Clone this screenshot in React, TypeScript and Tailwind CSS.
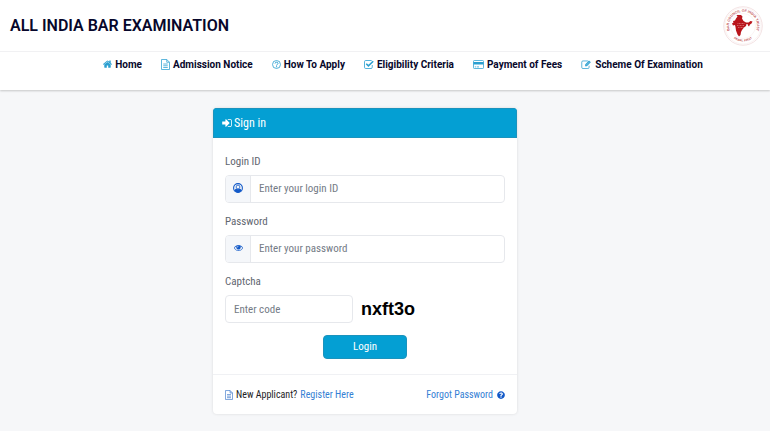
import type { ReactNode } from 'react';
import { FaQuestionCircle } from 'react-icons/fa';

interface IconProps {
	className?: string;
}

function HomeIcon({ className }: IconProps) {
	return (
		<svg viewBox="90 180 1612 1400" fill="currentColor" className={className} aria-hidden="true">
			<path d="M1472 992v480q0 26-19 45t-45 19h-384v-384h-256v384h-384q-26 0-45-19t-19-45v-480q0-1 .5-3t.5-3l575-474 575 474q1 2 1 6zm223-69l-62 74q-8 9-21 11h-3q-13 0-21-7l-692-577-692 577q-12 8-24 7-13-2-21-11l-62-74q-8-10-7-23.5t11-21.5l719-599q32-26 76-26t76 26l244 204v-195q0-14 9-23t23-9h192q14 0 23 9t9 23v408l219 182q10 8 11 21.5t-7 23.5z" />
		</svg>
	);
}

function FileIcon({ className }: IconProps) {
	return (
		<svg viewBox="0 0 18 22" fill="none" stroke="currentColor" strokeWidth="1.5" strokeLinejoin="round" className={className} aria-hidden="true">
			<path d="M1 1h10.5L17 6.500V21H1zM11.500 1v5.500H17M4.500 10h9M4.500 13.500h9M4.500 17h9" />
		</svg>
	);
}

function HelpIcon({ className }: IconProps) {
	return (
		<svg viewBox="0 0 20 20" fill="none" stroke="currentColor" strokeWidth="1.800" className={className} aria-hidden="true">
			<circle cx="10" cy="10" r="8.800" />
			<path d="M6.800 7.800C7 5.800 8.300 4.900 10 4.900c2 0 3.300 1.200 3.300 2.700 0 2.300-3.200 2.200-3.200 4.800" strokeWidth="2.200" />
			<path d="M8.900 13.700h2.400V16H8.900z" fill="currentColor" stroke="none" />
		</svg>
	);
}

function CheckIcon({ className }: IconProps) {
	return (
		<svg viewBox="0 0 20 18" fill="none" stroke="currentColor" className={className} aria-hidden="true">
			<path d="M16.500 10v4.500a2.500 2.500 0 0 1-2.500 2.500H3.500A2.500 2.500 0 0 1 1 14.500v-11A2.500 2.500 0 0 1 3.500 1H14l1.500.4" strokeWidth="1.600" />
			<path d="M4.500 7.500l4.300 4.300L18.500 2.500" strokeWidth="3" />
		</svg>
	);
}

function CardIcon({ className }: IconProps) {
	return (
		<svg viewBox="0 0 22 18" fill="none" stroke="currentColor" strokeWidth="1.500" className={className} aria-hidden="true">
			<rect x="1" y="1" width="20" height="16" rx="1.500" />
			<path d="M1 4h20v5H1z" fill="currentColor" stroke="none" />
			<path d="M3.500 13.800h3M8 13.800h4" />
		</svg>
	);
}

function EditIcon({ className }: IconProps) {
	return (
		<svg viewBox="0 0 22 19" fill="none" stroke="currentColor" className={className} aria-hidden="true">
			<path d="M16.500 12v3.500A2.500 2.500 0 0 1 14 18H3.500A2.500 2.500 0 0 1 1 15.500v-11A2.500 2.500 0 0 1 3.500 2H14" strokeWidth="1.600" />
			<path d="M8 9.500L16.300 1.200l3.800 3.800-8.300 8.300H8z" fill="currentColor" stroke="none" />
			<path d="M9.600 11.800l7.700-7.700" stroke="#ffffff" strokeWidth=".8" />
		</svg>
	);
}

function SignInIcon({ className }: IconProps) {
	return (
		<svg viewBox="128 256 1536 1280" fill="currentColor" className={className} aria-hidden="true">
			<path d="M1312 896q0 26-19 45l-544 544q-19 19-45 19t-45-19-19-45v-288h-448q-26 0-45-19t-19-45v-384q0-26 19-45t45-19h448v-288q0-26 19-45t45-19 45 19l544 544q19 19 19 45zm352-352v704q0 119-84.5 203.5t-203.5 84.5h-320q-13 0-22.5-9.5t-9.5-22.5q0-4-1-20t-.5-26.5 3-23.5 10-19.5 20.5-6.5h320q66 0 113-47t47-113v-704q0-66-47-113t-113-47h-312l-11.5-1-11.5-3-8-5.5-7-9-2-13.5q0-4-1-20t-.5-26.5 3-23.5 10-19.5 20.5-6.5h320q119 0 203.5 84.5t84.5 203.5z" />
		</svg>
	);
}

function UserIcon({ className }: IconProps) {
	return (
		<svg viewBox="0 0 20 20" fill="none" stroke="currentColor" className={className} aria-hidden="true">
			<circle cx="10" cy="10" r="8.800" strokeWidth="2.200" />
			<path d="M3 15.500C3.600 12.600 5 11.600 7 11.600c1.800 1.100 4.200 1.100 6 0 2 0 3.400 1 4 3.900C13.500 20.200 6.500 20.200 3 15.500z" fill="currentColor" stroke="none" />
			<circle cx="10" cy="8" r="3.800" fill="#f5f7fa" strokeWidth="1.600" />
		</svg>
	);
}

function EyeIcon({ className }: IconProps) {
	return (
		<svg viewBox="0 384 1792 1152" fill="currentColor" className={className} aria-hidden="true">
			<path d="M1664 960q-152-236-381-353 61 104 61 225 0 185-131.5 316.5t-316.5 131.5-316.5-131.5-131.5-316.5q0-121 61-225-229 117-381 353 133 205 333.5 326.5t434.5 121.5 434.5-121.5 333.5-326.5zm-720-384q0-20-14-34t-34-14q-125 0-214.5 89.5t-89.5 214.5q0 20 14 34t34 14 34-14 14-34q0-86 61-147t147-61q20 0 34-14t14-34zm848 384q0 34-20 69-140 230-376.5 368.5t-499.5 138.5-499.5-139-376.5-368q-20-35-20-69t20-69q140-229 376.5-368t499.5-139 499.5 139 376.5 368q20 35 20 69z" />
		</svg>
	);
}

/** Round council seal with the map in the middle */
function Seal({ className }: IconProps) {
	return (
		<svg viewBox="0 0 80 80" className={className} role="img" aria-label="Bar Council of India Trust">
			<defs>
				<path id="seal-top" d="M14 50A28 28 0 1 1 66 50" />
				<path id="seal-bottom" d="M20 64A32 32 0 0 0 60 64" />
			</defs>
			<circle cx="40" cy="40" r="38.500" fill="#ffffff" stroke="#e6c4c6" strokeWidth="1" />
			<circle cx="40" cy="40" r="36" fill="none" stroke="#f3e2e3" strokeWidth=".8" />
			<circle cx="40" cy="40" r="25" fill="none" stroke="#f3e2e3" strokeWidth=".8" />
			<g fill="#c4565b" fontFamily="Liberation Sans, sans-serif" fontWeight="700">
				<text fontSize="7">
					<textPath href="#seal-top" startOffset="50%" textAnchor="middle">BAR COUNCIL OF INDIA TRUST</textPath>
				</text>
				<text fontSize="6">
					<textPath href="#seal-bottom" startOffset="50%" textAnchor="middle">PEARL FIRST</textPath>
				</text>
			</g>
			<path
				d="M31 18l5 0 3 3-1 4 3 5 5 3 5 0 4-3 4 1-2 4-3 2-2 4-2-2-1-3-2 0-1 4-4 3-4 5-2 4-1 6-3 3-3-4-3-8-1-7-1-4-4 1-2-4 3-2-1-3 4-1 2-4 3-4-2-3z"
				fill="#b9151b"
			/>
			<path d="M29 35h14M28 39h14M30 43h11" stroke="#eab5b7" strokeWidth="1" strokeDasharray="2 1" />
		</svg>
	);
}

interface NavItem {
	label: string;
	icon: ReactNode;
}

const navItems: NavItem[] = [
	{ label: 'Home', icon: <HomeIcon className="h-2 w-[9px]" /> },
	{ label: 'Admission Notice', icon: <FileIcon className="h-[11px] w-[9px]" /> },
	{ label: 'How To Apply', icon: <HelpIcon className="size-[9px]" /> },
	{ label: 'Eligibility Criteria', icon: <CheckIcon className="h-[9px] w-[10px]" /> },
	{ label: 'Payment of Fees', icon: <CardIcon className="h-[9px] w-[11px]" /> },
	{ label: 'Scheme Of Examination', icon: <EditIcon className="h-[9px] w-[11px]" /> },
];

interface FieldProps {
	id: string;
	label: string;
	type: string;
	placeholder: string;
	icon: ReactNode;
}

/** Labelled input with an icon box on its left side */
function Field({ id, label, type, placeholder, icon }: FieldProps) {
	return (
		<div className="mb-3">
			<label htmlFor={id} className="mb-1.5 block leading-[14px] text-[#5f6670]">
				{label}
			</label>
			<div className="flex h-7 overflow-hidden rounded border border-[#e6e8ec]">
				<span className="flex w-[25px] items-center justify-center border-r border-[#e6e8ec] bg-[#f5f7fa] pb-0.5 text-[#1259c8]">
					{icon}
				</span>
				<input id={id} type={type} placeholder={placeholder} className="min-w-0 flex-1 px-2 placeholder:text-[#747b86] focus:outline-none" />
			</div>
		</div>
	);
}

export default function App() {
	return (
		<div className="min-h-screen bg-[#f6f7f9] font-['Roboto_Condensed','Roboto','Liberation_Sans',sans-serif] text-[11px]">
			<header className="bg-white font-['Roboto','Liberation_Sans',sans-serif] shadow-[0_1px_2px_rgba(0,0,0,0.2)]">
				<div className="flex h-[52px] items-center justify-between border-b border-[#f1f1f3] pr-[7px] pl-2.5">
					<h1 className="text-base font-semibold text-[#07072b]">ALL INDIA BAR EXAMINATION</h1>
					<Seal className="size-10" />
				</div>
				<nav className="flex h-[38px] justify-center gap-[19px] pt-1 pl-9">
					{navItems.map((item) => (
						<a key={item.label} href="#" className="flex h-4 items-center gap-[3px] text-[10px] font-bold whitespace-nowrap text-[#07072b]">
							<span className="text-[#2a9fd0]">{item.icon}</span>
							{item.label}
						</a>
					))}
				</nav>
			</header>

			<main className="flex justify-center pt-[18px] pr-10">
				<form className="w-full max-w-[304px] overflow-hidden rounded bg-white shadow-[0_0_3px_rgba(0,0,0,0.12)]">
					<h2 className="flex h-[30px] items-center gap-0.5 border border-[#1b93bd] bg-[#049fd3] px-2 text-xs text-white">
						<SignInIcon className="h-2 w-[10px]" />
						Sign in
					</h2>
					<div className="px-3 pt-[17px] pb-[15px]">
						<Field id="login" label="Login ID" type="text" placeholder="Enter your login ID" icon={<UserIcon className="size-[10px]" />} />
						<Field id="password" label="Password" type="password" placeholder="Enter your password" icon={<EyeIcon className="h-1.5 w-[9px]" />} />
						<label htmlFor="captcha" className="mb-1.5 block leading-[14px] text-[#5f6670]">
							Captcha
						</label>
						<div className="flex items-center gap-2">
							<input
								id="captcha"
								type="text"
								placeholder="Enter code"
								className="h-7 w-32 rounded border border-[#e6e8ec] px-2 placeholder:text-[#747b86] focus:outline-none"
							/>
							<b className="font-['Liberation_Sans',sans-serif] text-lg leading-6 text-black">nxft3o</b>
						</div>
						<button type="submit" className="mx-auto mt-3 block h-6 w-[84px] rounded border border-[#1b93bd] bg-[#049fd3] text-white">
							Login
						</button>
					</div>
					<div className="flex h-10 items-center justify-between border-t border-[#f0f1f4] px-3 text-[10px]">
						<p className="flex items-center gap-[3px] text-[#1c1c24]">
							<FileIcon className="h-[10px] w-2 text-[#3b76c8]" />
							New Applicant?
							<a href="#" className="text-[#3480d4]">
								Register Here
							</a>
						</p>
						<a href="#" className="flex items-center gap-1 text-[#3480d4]">
							Forgot Password
							<FaQuestionCircle className="size-2 text-[#1259c8]" />
						</a>
					</div>
				</form>
			</main>
		</div>
	);
}
